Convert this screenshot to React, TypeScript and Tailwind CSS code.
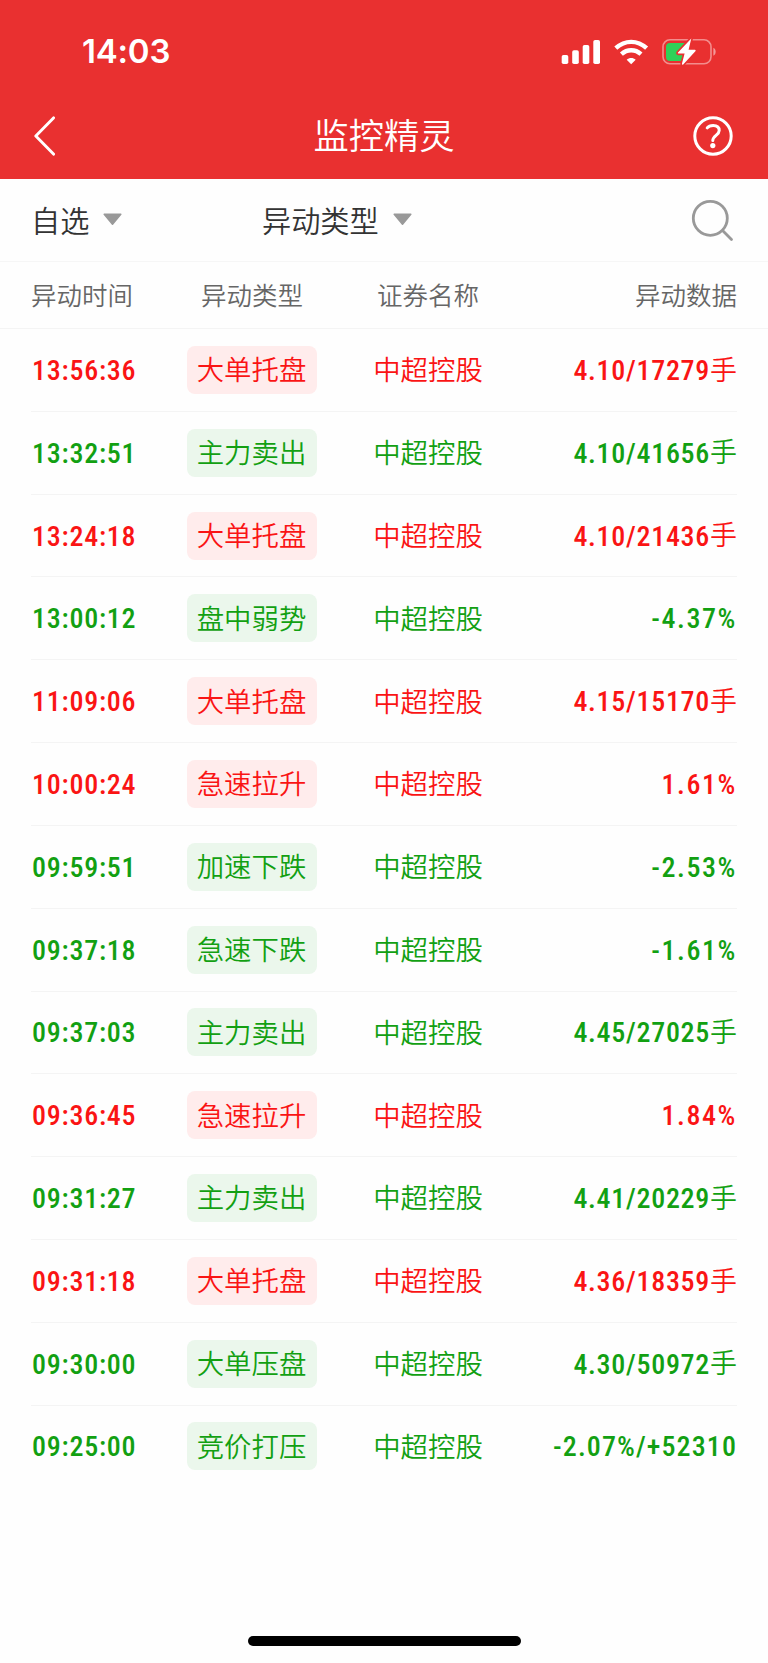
type Trend = "up" | "down";

interface Alert {
  time: string;
  type: string;
  name: string;
  value: string;
  unit?: string;
  trend: Trend;
}

const ALERTS: Alert[] = [
  { time: "13:56:36", type: "大单托盘", name: "中超控股", value: "4.10/17279", unit: "手", trend: "up" },
  { time: "13:32:51", type: "主力卖出", name: "中超控股", value: "4.10/41656", unit: "手", trend: "down" },
  { time: "13:24:18", type: "大单托盘", name: "中超控股", value: "4.10/21436", unit: "手", trend: "up" },
  { time: "13:00:12", type: "盘中弱势", name: "中超控股", value: "-4.37%", trend: "down" },
  { time: "11:09:06", type: "大单托盘", name: "中超控股", value: "4.15/15170", unit: "手", trend: "up" },
  { time: "10:00:24", type: "急速拉升", name: "中超控股", value: "1.61%", trend: "up" },
  { time: "09:59:51", type: "加速下跌", name: "中超控股", value: "-2.53%", trend: "down" },
  { time: "09:37:18", type: "急速下跌", name: "中超控股", value: "-1.61%", trend: "down" },
  { time: "09:37:03", type: "主力卖出", name: "中超控股", value: "4.45/27025", unit: "手", trend: "down" },
  { time: "09:36:45", type: "急速拉升", name: "中超控股", value: "1.84%", trend: "up" },
  { time: "09:31:27", type: "主力卖出", name: "中超控股", value: "4.41/20229", unit: "手", trend: "down" },
  { time: "09:31:18", type: "大单托盘", name: "中超控股", value: "4.36/18359", unit: "手", trend: "up" },
  { time: "09:30:00", type: "大单压盘", name: "中超控股", value: "4.30/50972", unit: "手", trend: "down" },
  { time: "09:25:00", type: "竞价打压", name: "中超控股", value: "-2.07%/+52310", trend: "down" },
];

const TEXT_COLORS: Record<Trend, string> = {
  up: "text-[#fa1414]",
  down: "text-[#12a012]",
};

const TAG_COLORS: Record<Trend, string> = {
  up: "bg-[#ffecec]",
  down: "bg-[#ebf7ec]",
};

function StatusIcons() {
  return (
    <svg width="156" height="30" viewBox="0 0 156 30" fill="none">
      <g fill="#fff">
        <rect x="1.7" y="18" width="6.6" height="9" rx="1.8" />
        <rect x="12.2" y="13.2" width="6.6" height="13.8" rx="1.8" />
        <rect x="22.7" y="8" width="6.6" height="19" rx="1.8" />
        <rect x="33.3" y="3" width="6.7" height="24" rx="1.8" />
      </g>
      <g stroke="#fff" strokeWidth="4.4">
        <path d="M55.8 11.2C65 2.7 77.4 2.7 86.6 11.2" />
        <path d="M61.4 17.2C67.2 12 75.2 12 81 17.2" />
      </g>
      <path d="M71.2 27.3L66.7 22.7C69.2 20.4 73.2 20.4 75.7 22.7Z" fill="#fff" />
      <rect x="103" y="2.8" width="48" height="24" rx="7" stroke="#fff" strokeOpacity=".45" strokeWidth="1.6" />
      <path d="M153.4 10.8C156.4 12 156.4 17.6 153.4 18.8Z" fill="#fff" fillOpacity=".5" />
      <path d="M110 6H126V24H110Q106 24 106 20V10Q106 6 110 6Z" fill="#30d158" />
      <path
        d="M131.3 1.4L118 15.6Q117.4 16.5 118.5 16.6H124.6L122 26.5Q122 28.4 123.2 27.4L135.6 14Q136 13 135 12.8H128.6L131.3 1.4Z"
        fill="#fff"
        stroke="#e93030"
        strokeWidth="3.4"
        strokeLinejoin="round"
        paintOrder="stroke"
      />
    </svg>
  );
}

function BackIcon() {
  return (
    <svg width="24" height="42" viewBox="0 0 24 42" fill="none" stroke="#fff" strokeWidth="2.9" strokeLinecap="round" strokeLinejoin="round">
      <path d="M22.5 2.9L4.8 21L22.5 39.1" />
    </svg>
  );
}

function HelpIcon() {
  return (
    <svg width="40" height="40" viewBox="0 0 40 40" fill="none" stroke="#fff" strokeWidth="3">
      <circle cx="20" cy="20" r="18.2" />
      <path d="M14.2 11.8Q16 9.4 20.2 9.4C24.2 9.4 26.2 11.6 26.2 14.4C26.2 19 19.8 19.6 19.8 24.4" strokeLinecap="round" />
      <circle cx="19.8" cy="29.6" r="2.6" fill="#fff" stroke="none" />
    </svg>
  );
}

function SearchIcon() {
  return (
    <svg width="44" height="44" viewBox="0 0 44 44" fill="none" stroke="#999" strokeWidth="2.8" strokeLinecap="round">
      <circle cx="20.3" cy="20.3" r="17" />
      <path d="M32.8 32.8L41.5 41.5" />
    </svg>
  );
}

function Caret() {
  return (
    <svg width="19" height="13" viewBox="0 0 19 13" fill="#999" stroke="#999" strokeWidth="1.5" strokeLinejoin="round">
      <path d="M1.2 1.3H17.8L9.5 11.2Z" />
    </svg>
  );
}

// percentages are set a little wider than price/volume pairs
function valueTracking(alert: Alert) {
  if (alert.unit) return "tracking-[0.7px]";
  return alert.value.includes("/") ? "tracking-[1.1px]" : "tracking-[1.6px]";
}

function AlertRow({ alert, last }: { alert: Alert; last: boolean }) {
  return (
    <div
      className={`grid h-[82.82px] grid-cols-[156px_130px_222px_1fr] items-center border-b ${
        last ? "border-transparent" : "border-[#f4f4f4]"
      } ${TEXT_COLORS[alert.trend]}`}
    >
      <span className="pt-0.5 pl-px font-[Roboto] text-[28px] font-medium tracking-[0.75px] [font-stretch:87.5%]">{alert.time}</span>
      <span
        className={`flex h-12 items-center justify-center rounded-lg pr-px pb-0.5 text-[27.4px] whitespace-nowrap ${TAG_COLORS[alert.trend]}`}
      >
        {alert.type}
      </span>
      <span className="pb-0.5 text-center text-[27.4px]">{alert.name}</span>
      <span className="flex items-center justify-end whitespace-nowrap">
        <span className={`pt-0.5 font-[Roboto] text-[28px] font-medium [font-stretch:87.5%] ${valueTracking(alert)}`}>
          {alert.value}
        </span>
        {alert.unit && <span className="pb-0.5 text-[27px]">{alert.unit}</span>}
      </span>
    </div>
  );
}

export default function App() {
  return (
    <div className="flex h-[1663px] w-[768px] flex-col bg-[#fefefe] font-['Noto_Sans_CJK_SC',sans-serif] font-[350]">
      <header className="h-[179px] bg-[#e93030] text-white">
        <div className="flex h-[94px] items-center justify-between pt-2.5 pr-[52px] pl-[82px]">
          <span className="font-[Inter] text-[33px] font-semibold tracking-[-0.2px]">14:03</span>
          <StatusIcons />
        </div>
        <div className="flex h-[84px] items-center justify-between pr-[35px] pl-[31px]">
          <div className="w-11">
            <BackIcon />
          </div>
          <h1 className="pb-1 text-[35.3px]">监控精灵</h1>
          <HelpIcon />
        </div>
      </header>

      <div className="flex h-[83px] items-center border-b border-[#f6f6f6] pr-[34px] pl-[31px] text-[29.2px] text-[#333]">
        <div className="flex w-[231px] items-center gap-3.5">
          自选
          <Caret />
        </div>
        <div className="flex flex-1 items-center gap-3.5">
          异动类型
          <Caret />
        </div>
        <SearchIcon />
      </div>

      <div className="grid h-[67px] grid-cols-[156px_130px_222px_1fr] items-center border-b border-[#f4f4f4] px-[31px] pb-0.5 text-[25.5px] text-[#666]">
        <span>异动时间</span>
        <span className="text-center">异动类型</span>
        <span className="text-center">证券名称</span>
        <span className="text-right">异动数据</span>
      </div>

      <main className="flex-1 px-[31px]">
        {ALERTS.map((alert, i) => (
          <AlertRow key={alert.time} alert={alert} last={i === ALERTS.length - 1} />
        ))}
      </main>

      <div className="flex justify-center pb-[17px]">
        <div className="h-2.5 w-[273px] rounded-full bg-black" />
      </div>
    </div>
  );
}
